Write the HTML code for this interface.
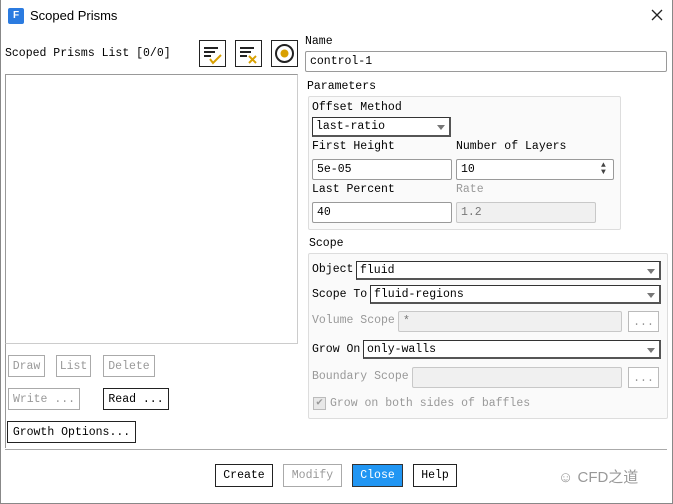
<!DOCTYPE html>
<html><head><meta charset="utf-8"><style>
*{box-sizing:border-box;margin:0;padding:0}
body{width:673px;height:504px;background:#fff;position:relative;overflow:hidden;font-family:"Liberation Mono",monospace;font-size:11.5px;color:#000}
.a{position:absolute;white-space:nowrap}
.t{position:absolute;white-space:nowrap;line-height:14px}
.g{color:#999}
.in{position:absolute;border:1px solid #9a9a9a;border-radius:2px;background:#fff;padding-left:4px;line-height:19px}
.dis{background:#f0f0f0;border-color:#c8c8c8}
.dd{position:absolute;border:1px solid #333;border-right:2px solid #555;border-bottom:2px solid #555;background:#fff;padding-left:3px;line-height:17px}
.dd:after{content:"";position:absolute;right:4px;top:7px;border-left:4px solid transparent;border-right:4px solid transparent;border-top:5px solid #777}
.btn{position:absolute;border:1px solid #222;text-align:center;line-height:21px;background:#fff}
.bd{border-color:#aaa;color:#999}
.box{position:absolute;border:1px solid #ddd;border-radius:2px;background:#fafafa}
</style></head><body>
<div class="a" style="left:0;top:0;width:673px;height:504px;border:1px solid #888;border-top:none"></div>
<div class="a" style="left:8px;top:8px;width:16px;height:16px;background:#2b7be0;border-radius:2px;color:#fff;font:bold 10px 'Liberation Sans',sans-serif;text-align:center;line-height:16px">F</div>
<div class="a" style="left:30px;top:8px;font:13px 'Liberation Sans',sans-serif">Scoped Prisms</div>
<svg class="a" style="left:651px;top:9px" width="12" height="12"><path d="M1 1l10 10M11 1L1 11" stroke="#222" stroke-width="1.3"/></svg>

<div class="t" style="left:5px;top:47px">Scoped Prisms List [0/0]</div>
<svg class="a" style="left:199px;top:40px" width="27" height="27"><rect x=".5" y=".5" width="26" height="26" fill="#fff" stroke="#222"/><path d="M5 8h14M5 12h11M5 16h7" stroke="#222" stroke-width="2"/><path d="M11 19l3 4 8-8" stroke="#d9a000" stroke-width="2" fill="none"/></svg>
<svg class="a" style="left:235px;top:40px" width="27" height="27"><rect x=".5" y=".5" width="26" height="26" fill="#fff" stroke="#222"/><path d="M5 8h14M5 12h11M5 16h7" stroke="#222" stroke-width="2"/><path d="M14 16l7 7M21 16l-7 7" stroke="#d9a000" stroke-width="2"/></svg>
<svg class="a" style="left:271px;top:40px" width="27" height="27"><rect x=".5" y=".5" width="26" height="26" fill="#fff" stroke="#222"/><circle cx="13.5" cy="13.5" r="8.5" stroke="#222" stroke-width="2" fill="none"/><circle cx="13.5" cy="13.5" r="4" fill="#d9a000"/></svg>
<div class="a" style="left:5px;top:74px;width:293px;height:270px;border:1px solid #999;border-right:1px solid #ccc;border-bottom:1px solid #ccc"></div>
<div class="a" style="left:5px;top:344px;width:1px;height:104px;background:#999"></div>

<div class="btn bd" style="left:8px;top:355px;width:37px;height:22px">Draw</div>
<div class="btn bd" style="left:56px;top:355px;width:35px;height:22px">List</div>
<div class="btn bd" style="left:103px;top:355px;width:52px;height:22px">Delete</div>
<div class="btn bd" style="left:8px;top:388px;width:72px;height:22px">Write ...</div>
<div class="btn" style="left:103px;top:388px;width:66px;height:22px">Read ...</div>
<div class="btn" style="left:7px;top:421px;width:129px;height:22px">Growth Options...</div>

<div class="t" style="left:305px;top:35px">Name</div>
<div class="in" style="left:305px;top:51px;width:362px;height:21px">control-1</div>
<div class="t" style="left:307px;top:80px">Parameters</div>
<div class="box" style="left:308px;top:96px;width:313px;height:134px"></div>
<div class="t" style="left:312px;top:101px">Offset Method</div>
<div class="dd" style="left:312px;top:117px;width:139px;height:20px">last-ratio</div>
<div class="t" style="left:312px;top:140px">First Height</div>
<div class="t" style="left:456px;top:140px">Number of Layers</div>
<div class="in" style="left:312px;top:159px;width:140px;height:21px">5e-05</div>
<div class="in" style="left:456px;top:159px;width:158px;height:21px">10</div>
<div class="a" style="left:601px;top:162px;font-size:8px;line-height:7px;color:#444">▲<br>▼</div>
<div class="t" style="left:312px;top:183px">Last Percent</div>
<div class="t g" style="left:456px;top:183px">Rate</div>
<div class="in" style="left:312px;top:202px;width:140px;height:21px">40</div>
<div class="in dis" style="left:456px;top:202px;width:140px;height:21px;color:#777">1.2</div>

<div class="t" style="left:309px;top:237px">Scope</div>
<div class="box" style="left:308px;top:253px;width:360px;height:166px"></div>
<div class="t" style="left:312px;top:263px">Object</div>
<div class="dd" style="left:356px;top:261px;width:305px;height:19px">fluid</div>
<div class="t" style="left:312px;top:288px">Scope To</div>
<div class="dd" style="left:370px;top:285px;width:291px;height:19px">fluid-regions</div>
<div class="t g" style="left:312px;top:314px">Volume Scope</div>
<div class="in dis" style="left:398px;top:311px;width:224px;height:21px;color:#777">*</div>
<div class="btn bd" style="left:628px;top:311px;width:31px;height:21px;border-color:#bbb">...</div>
<div class="t" style="left:312px;top:343px">Grow On</div>
<div class="dd" style="left:363px;top:340px;width:298px;height:19px">only-walls</div>
<div class="t g" style="left:312px;top:370px">Boundary Scope</div>
<div class="in dis" style="left:412px;top:367px;width:210px;height:21px"></div>
<div class="btn bd" style="left:628px;top:367px;width:31px;height:21px;border-color:#bbb">...</div>
<div class="a" style="left:313px;top:397px;width:13px;height:13px;border:1px solid #bbb;background:#e8e8e8;color:#999;font-size:11px;line-height:11px;text-align:center">✔</div>
<div class="t g" style="left:330px;top:397px">Grow on both sides of baffles</div>

<div class="a" style="left:5px;top:449px;width:662px;height:1px;background:#aaa"></div>
<div class="btn" style="left:215px;top:464px;width:58px;height:23px">Create</div>
<div class="btn bd" style="left:283px;top:464px;width:59px;height:23px">Modify</div>
<div class="btn" style="left:352px;top:464px;width:51px;height:23px;background:#2196f3;color:#fff;border-color:#333">Close</div>
<div class="btn" style="left:413px;top:464px;width:44px;height:23px">Help</div>
<div class="a" style="left:558px;top:466px;font:15px 'Liberation Sans','Noto Sans CJK SC',sans-serif;color:#999">☺ CFD之道</div>
</body></html>
